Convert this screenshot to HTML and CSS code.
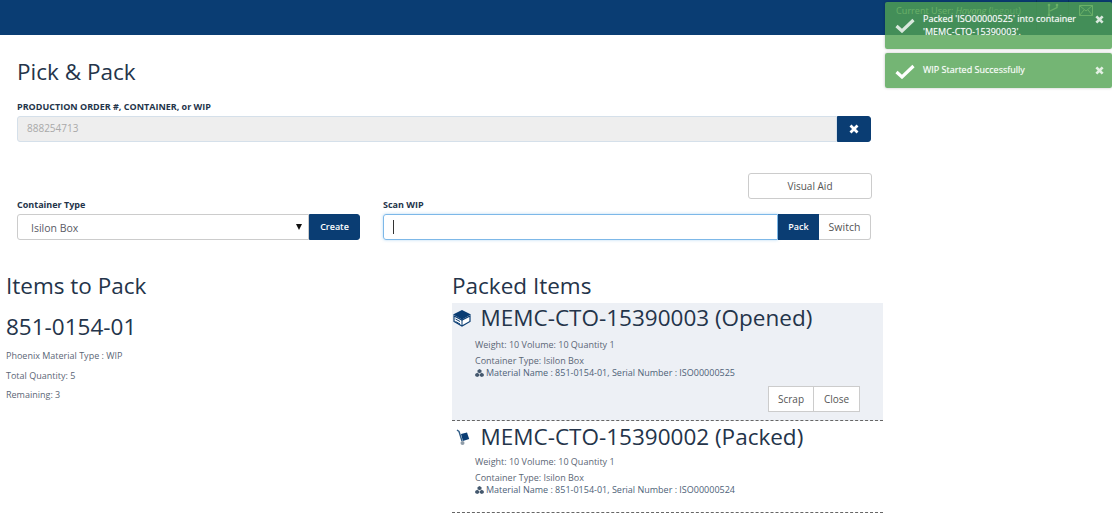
FILE: index.html
```html
<!DOCTYPE html>
<html lang="en">
<head>
<meta charset="utf-8">
<title>Pick &amp; Pack</title>
<link rel="stylesheet" href="styles.css">
</head>
<body>
<header class="topbar">
  <span class="user">Current User: <em>Havang</em> (<a class="logout">logout</a>)</span>
  <span class="top-item branch">
    <svg width="12" height="14" viewBox="0 0 12 14"><path d="M2 1v12M10 1v3.500L3 8" fill="none" stroke="#c8e0c0" stroke-width="1.300"/><circle cx="2" cy="2" r="1.300" fill="#c8e0c0"/><circle cx="10" cy="2" r="1.300" fill="#c8e0c0"/><circle cx="2" cy="12" r="1.300" fill="#c8e0c0"/></svg>
  </span>
  <span class="top-item mail">
    <svg width="14" height="11" viewBox="0 0 14 11"><path d="M.5.500h13v10H.5zM.5.500 7 6l6.500-5.500M.5 10.500 5 5M13.500 10.500 9 5" fill="none" stroke="#c8e0c0"/></svg>
  </span>
</header>

<div class="toasts">
  <div class="toast toast-first">
    <svg class="check" width="20" height="15" viewBox="0 0 20 15"><path d="M1.500 8 7 13 18.500 2" fill="none" stroke="#fff" stroke-width="3.200"/></svg>
    <p>Packed 'ISO00000525' into container 'MEMC-CTO-15390003'.</p>
    <svg class="toast-x" width="9" height="9" viewBox="0 0 10 10"><path d="M1.500 1.500l7 7M8.500 1.500l-7 7" stroke="#fff" stroke-width="3" fill="none"/></svg>
  </div>
  <div class="toast toast-second">
    <svg class="check" width="20" height="15" viewBox="0 0 20 15"><path d="M1.500 8 7 13 18.500 2" fill="none" stroke="#fff" stroke-width="3.200"/></svg>
    <p>WIP Started Successfully</p>
    <svg class="toast-x" width="9" height="9" viewBox="0 0 10 10"><path d="M1.500 1.500l7 7M8.500 1.500l-7 7" stroke="#fff" stroke-width="3" fill="none"/></svg>
  </div>
</div>

<main class="page">
  <section class="form">
    <h1>Pick &amp; Pack</h1>
    <label class="lbl">PRODUCTION ORDER #, CONTAINER, or WIP</label>
    <div class="group">
      <div class="field disabled">888254713</div>
      <button class="btn primary clear" type="button">
        <svg width="10" height="10" viewBox="0 0 10 10"><path d="M1.500 1.500l7 7M8.500 1.500l-7 7" stroke="#fff" stroke-width="2.800" fill="none"/></svg>
      </button>
    </div>
    <div class="aid-row"><button class="btn aid" type="button">Visual Aid</button></div>
    <div class="scan-row">
      <div class="col-type">
        <label class="lbl">Container Type</label>
        <div class="group">
          <div class="field select">Isilon Box<span class="caret"></span></div>
          <button class="btn primary create" type="button">Create</button>
        </div>
      </div>
      <div class="col-scan">
        <label class="lbl">Scan WIP</label>
        <div class="group">
          <div class="field focus"><span class="cursor"></span></div>
          <button class="btn primary pack" type="button">Pack</button>
          <button class="btn switch" type="button">Switch</button>
        </div>
      </div>
    </div>
  </section>

  <section class="lists">
    <div class="to-pack">
      <h2>Items to Pack</h2>
      <h3>851-0154-01</h3>
      <p class="meta">Phoenix Material Type : WIP</p>
      <p class="meta">Total Quantity: 5</p>
      <p class="meta">Remaining: 3</p>
    </div>
    <div class="packed">
      <h2>Packed Items</h2>
      <article class="box opened">
        <h3 class="box-title">
          <svg class="box-icon" width="20" height="18" viewBox="0 0 20 18"><path d="M2 7v5.500L10 17l8-4.500V7L10 11z" fill="#fff" stroke="#0a3d73" stroke-width="1.200"/><path d="M10 1 19 5.500 10 10.500 1 5.500z" fill="#0a3d73"/><path d="M3.500 10 8 12.500M3.500 12.500 8 15M10 11v6" fill="none" stroke="#0a3d73"/></svg>
          MEMC-CTO-15390003 (Opened)
        </h3>
        <p class="info first">Weight: 10 Volume: 10 Quantity 1</p>
        <p class="info">Container Type: Isilon Box</p>
        <p class="info material">
          <svg width="9" height="8" viewBox="0 0 9 8"><path d="M4.500 0 6.500 1.200v2L4.500 4.200 2.500 3.200v-2zM2.200 3.800 4.200 5v2L2.200 8 .2 7V5zM6.800 3.800 8.800 5v2L6.800 8 4.800 7V5z" fill="#44586e"/></svg>
          <a>Material Name : 851-0154-01, Serial Number : ISO00000525</a>
        </p>
        <div class="actions">
          <button class="btn act" type="button">Scrap</button>
          <button class="btn act" type="button">Close</button>
        </div>
      </article>
      <article class="box closed">
        <h3 class="box-title">
          <svg class="box-icon" width="20" height="18" viewBox="0 0 20 18"><path d="M5 2 7 3.500l3 9.500" fill="none" stroke="#2f5c86" stroke-width="1.400"/><path d="M9 6 15 4.500l2.200 6.500-6.300 2z" fill="#0a3d73"/><circle cx="10.500" cy="15" r="2" fill="#8f9ca8"/></svg>
          MEMC-CTO-15390002 (Packed)
        </h3>
        <p class="info first">Weight: 10 Volume: 10 Quantity 1</p>
        <p class="info">Container Type: Isilon Box</p>
        <p class="info material">
          <svg width="9" height="8" viewBox="0 0 9 8"><path d="M4.500 0 6.500 1.200v2L4.500 4.200 2.500 3.200v-2zM2.200 3.800 4.200 5v2L2.200 8 .2 7V5zM6.800 3.800 8.800 5v2L6.800 8 4.800 7V5z" fill="#44586e"/></svg>
          <a>Material Name : 851-0154-01, Serial Number : ISO00000524</a>
        </p>
      </article>
    </div>
  </section>
</main>
</body>
</html>
```

FILE: styles.css
```css
* { box-sizing: border-box; }
html, body { margin: 0; padding: 0; height: 517px; overflow: hidden; background: #fff; }
body { font-family: "Open Sans", "Liberation Sans", sans-serif; color: #24344a; }
p, h1, h2, h3 { margin: 0; font-weight: 400; }

.topbar { height: 35px; background: #0a3d73; display: flex; justify-content: flex-end; align-items: flex-start; padding-right: 10px; color: #c8e0c0; font-size: 9.1px; }
.user { margin-right: 15px; line-height: 22px; }
.logout { opacity: .6; }
.top-item { height: 30px; padding-bottom: 10px; border-left: 1px solid #083362; display: flex; align-items: center; justify-content: center; }
.branch { width: 32px; }
.mail { width: 34px; }

.toasts { position: absolute; top: 2px; left: 885px; width: 227px; display: flex; flex-direction: column; gap: 4px; }
.toast { position: relative; border-radius: 2px; color: #fff; font-size: 9px; line-height: 13px; box-shadow: 0 0 3px rgba(0,0,0,.25); display: flex; text-shadow: 0 0 1px rgba(255,255,255,.5); }
.toast p { width: 160px; padding-top: 10px; }
.toast-first { height: 47px; background: rgba(81, 163, 81, .8); }
.toast-second { height: 35px; background: rgba(81, 163, 81, .8); }
.check { margin: 16px 8px 0 10px; flex: none; }
.toast-first .check, .toast-x { opacity: .8; }
.toast-second .check { margin-top: 11px; }
.toast-x { position: absolute; right: 8px; top: 13px; }

.form { width: 871px; padding: 0 0 0 17px; }
h1 { font-size: 22.5px; line-height: 32px; padding-top: 21px; margin-bottom: 13px; }
.lbl { display: block; font-size: 9px; font-weight: 700; line-height: 12px; margin-bottom: 3px; }
.group { display: flex; height: 26px; }
.field { flex: 1; height: 26px; border: 1px solid #ccc; border-radius: 3px 0 0 3px; font-size: 10px; line-height: 23px; padding-left: 9px; }
.disabled { background: #eee; border-color: #d5e0ea; color: #a9a9a9; }
.select { position: relative; padding-left: 13px; font-size: 10.5px; color: #5a5a66; line-height: 26px; }
.caret { position: absolute; right: 6px; top: 9px; border-left: 3.500px solid transparent; border-right: 3.500px solid transparent; border-top: 6px solid #111; }
.focus { border-color: #7db8e8; box-shadow: 0 0 3px rgba(102,175,233,.5); display: flex; align-items: center; }
.cursor { width: 1px; height: 14px; background: #333; }
.btn { font-family: inherit; height: 26px; padding: 0; background: #fff; border: 1px solid #ccc; border-radius: 3px; color: #555; font-size: 10px; }
.primary { background: #0a3d73; border-color: #0a3d73; color: #fff; font-size: 9px; font-weight: 600; border-radius: 0 3px 3px 0; padding-bottom: 1px; }
.clear { width: 34px; display: flex; align-items: center; justify-content: center; }
.create { width: 51px; }
.pack { width: 41px; border-radius: 0; }
.switch { width: 52px; border-radius: 0 3px 3px 0; border-left: 0; font-size: 10.5px; }
.aid-row { display: flex; justify-content: flex-end; margin-top: 31px; height: 26px; }
.aid { width: 124px; margin-right: -1px; }
.scan-row { display: flex; }
.col-type { width: 343px; margin-right: 23px; }
.col-scan { flex: 1; }

.lists { display: flex; padding-left: 6px; margin-top: 30px; }
.to-pack { width: 446px; }
.to-pack h2, .packed h2 { font-size: 22.5px; line-height: 32px; }
.packed h2 { margin-bottom: 1px; }
.to-pack h3 { font-size: 22.5px; line-height: 32px; margin-top: 9px; margin-bottom: 7px; }
.meta { font-size: 9px; line-height: 12px; margin-bottom: 7.5px; color: #5b6675; }
.packed { width: 431px; }
.box { border-bottom: 1px dashed #666; }
.opened { background: #edf0f5; height: 118px; }
.closed { height: 92px; }
.box-title { font-size: 22.5px; line-height: 31px; display: flex; align-items: center; }
.opened .box-title { line-height: 30px; }
.box-icon { margin: 0 8.5px 0 0; flex: none; }
.info { font-size: 9px; line-height: 12px; padding-left: 23px; color: #5b6675; margin-bottom: 4px; }
.info.first { margin-top: 4px; }
.opened .info.first { margin-top: 6px; }
.material { margin-top: -4px; display: flex; align-items: center; gap: 2px; }
.material a { color: #4d6278; }
.actions { display: flex; justify-content: flex-end; padding-right: 23px; margin-top: 7px; }
.act { width: 46px; border-radius: 0; font-size: 10px; }
.act + .act { border-left: 0; }
```
